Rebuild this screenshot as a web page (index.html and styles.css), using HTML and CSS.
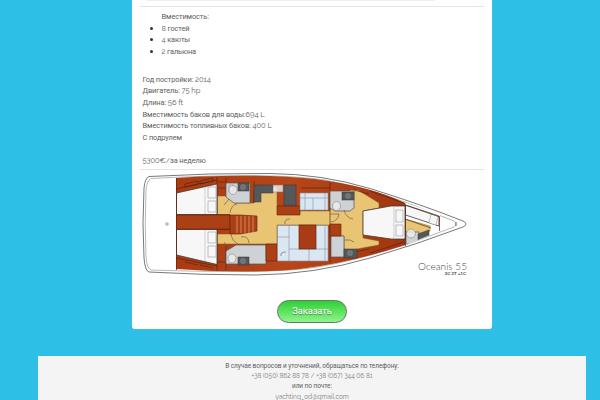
FILE: index.html
```
<!DOCTYPE html>
<html lang="ru">
<head>
<meta charset="utf-8">
<title>Oceanis 55</title>
<link rel="stylesheet" href="styles.css">
</head>
<body>
<main class="card">
  <div class="field"></div>
  <hr class="rule">
  <ul class="capacity">
    <li class="heading">Вместимость:</li>
    <li><span class="num">8</span> гостей</li>
    <li><span class="num">4</span> каюты</li>
    <li><span class="num">2</span> гальюна</li>
  </ul>
  <div class="specs">
    <p>Год постройки: <span class="num">2014</span></p>
    <p>Двигатель: <span class="num">75 hp</span></p>
    <p>Длина: <span class="num">56 ft</span></p>
    <p>Вместимость баков для воды:<span class="num">694 L</span></p>
    <p>Вместимость топливных баков: <span class="num">400 L</span></p>
    <p>С подрулем</p>
    <p class="price"><span class="num">5300€/</span>за неделю</p>
  </div>
  <hr class="rule">
  <svg class="plan" viewBox="140 170 330 110" width="330" height="110">
    <defs>
      <clipPath id="inside"><path d="M176 178 L200 176.500 Q270 174 315 179 Q370 186 405 203 L440 214 L440 231 L405 245 Q350 263 300 269 Q250 274 176 269Z"/></clipPath>
      <linearGradient id="wood" x1="0" y1="0" x2="1" y2="0"><stop offset="0" stop-color="#a93a12"/><stop offset=".5" stop-color="#b74719"/><stop offset="1" stop-color="#a23510"/></linearGradient>
    </defs>
    <path class="hull" d="M149 176.500 Q210 173 270 173.500 Q322 174 370 188.500 Q420 204 463 221 Q469 224 463 227 Q418 244 370 258 Q314 274.500 255 275 Q200 275 149 272 Q145 271 144 258 Q142 224 144 188 Q145 178 149 176.500Z"/>
    <path class="hull thin" d="M151 178.500 Q270 172 325 180 Q370 189 405 202 L454 221 Q458 224 454 227 L405 245 Q350 262 315 267.500 Q270 274 151 270 Q147 269 146 257 Q144.500 224 146 190 Q147 180 151 178.500Z"/>
    <g clip-path="url(#inside)">
      <rect x="176" y="172" width="229" height="104" fill="url(#wood)"/>
      <path class="foredeck" d="M405 200L442 212V232L405 248Z"/>
      <g class="floor">
        <path d="M217 196H234V203H254V187H277V206H300V211H330V205H350V190H358L379 203V208L363 211V238L379 241V245L357 249V256H344V236H330V225H277V244H217V234H231V215H217Z"/>
        <path d="M405 219L430 226V231L405 240Z"/>
      </g>
      <g class="line">
        <path d="M176 214.500H230M176 229.500H230M217 177V215M217 229V271M254 181V203M330 182V262M405 200V246M176 189L217 180M176 258L217 266M226 178V192M226 246V270"/>
        <path d="M185 184L198 181V184L185 187ZM200 181L213 178V181L200 184ZM185 262L198 265M200 265L213 268M218 182H225M218 188H225M218 262H225M301 188H330M370 191L404 203M370 253L404 242M354 190L369 194M354 252L369 249"/>
      </g>
      <g class="bed">
        <path d="M176.500 193L217 184V214.500H176.500Z"/>
        <path d="M176.500 229.500H217V264.500L176.500 255Z"/>
        <path d="M363 211L391 206H405V239H391L363 235Z"/>
        <path d="M405.500 205L439 216V226L405.500 215Z"/>
      </g>
      <path class="shade" d="M205 187V214M205 230V261M394 206V239"/>
      <g class="bed pillow">
        <rect x="208" y="187" width="8" height="11"/><rect x="208" y="201" width="8" height="11"/>
        <rect x="208" y="232" width="8" height="11"/><rect x="208" y="246" width="8" height="11"/>
        <rect x="396" y="210" width="7" height="12"/><rect x="396" y="225" width="7" height="11"/>
        <path d="M431 214L438 216L436 225L429 223Z"/>
      </g>
      <g class="bath">
        <path d="M226 183H250V203H234L226 197Z"/>
        <path d="M236 245H266V264H226V251Z"/>
        <path d="M330 191H354V208L350 211H335L330 208Z"/>
        <path d="M331 236H344V257H331Z"/>
        <path d="M406 232H419V244H406Z"/>
      </g>
      <g class="dark">
        <rect x="238" y="183" width="11" height="8"/>
        <rect x="238" y="257" width="11" height="8"/>
        <path d="M255 185H273V193H261V202H254V191Z"/>
        <rect x="284" y="185" width="12" height="21"/>
        <rect x="342" y="192" width="12" height="8"/>
        <rect x="344" y="249" width="13" height="9"/>
        <path d="M418 234L429 230V237L418 241Z"/>
      </g>
      <g class="toilet">
        <rect x="229" y="185" width="4" height="6"/><ellipse cx="233" cy="190" rx="4" ry="4.500"/>
        <ellipse cx="232" cy="258.500" rx="4" ry="4.500"/><ellipse cx="336.500" cy="206" rx="4" ry="4.500"/>
        <circle cx="411" cy="233.500" r="4.500"/><rect x="273" y="185" width="10" height="7"/>
      </g>
      <g class="basin">
        <circle cx="243" cy="187" r="2.500"/><circle cx="243" cy="261" r="2.500"/><circle cx="348" cy="196" r="2.500"/><circle cx="350" cy="253" r="2.500"/>
      </g>
      <g class="wood">
        <path d="M277 206H300V215H277Z"/>
        <path d="M176 215H230V229H176Z"/>
        <path d="M230 215H240L257 216V231L240 234H230Z"/>
        <path d="M266 244H277V261H266Z"/>
        <path d="M330 224H341V236H330Z"/>
      </g>
      <path class="steps" d="M237 216V233M241 216V233M245 216V233M249 216V233M253 216V233"/>
      <g class="sofa">
        <path d="M300 193H328V210H300Z"/>
        <path d="M277.500 225.500H328V261H277.500Z"/>
        <path d="M300 198H328M305 193V210M325 193V210M313 198V210M289 225V261M277.500 237H289M289 249H328M309 249V261M325 225V261"/>
      </g>
      <rect class="table" x="299" y="225" width="17" height="24"/>
      <g class="line door">
        <path d="M224 205L229 199M230 213Q231 205 237 204M224 242L229 248M231 234Q232 241 238 244M330 214H339Q338 221 331 222M344 210Q346 218 353 219M345 240Q350 239 354 242M241 237Q248 235 249 243"/>
        <path d="M285 224Q284 219 290 219M281 256Q280 252 286 252"/>
      </g>
    </g>
    <path class="line" d="M176.500 178V270M405.500 205V246M439.500 217V231M405 205L440 217M405 219L431 228M456 222V226"/>
    <circle class="mark" cx="167" cy="224" r="1.300"/><path class="mark" d="M165 224H169M167 222V226"/>
    <text class="model" x="418" y="269.500" textLength="49" lengthAdjust="spacingAndGlyphs">Oceanis 55</text>
    <text class="variant" x="444.500" y="275" textLength="21.500" lengthAdjust="spacingAndGlyphs">3C 3T +1C</text>
  </svg>
  <div class="actions"><button class="order" type="button">Заказать</button></div>
</main>
<footer class="footer">
  <p>В случае вопросов и уточнений, обращаться по телефону:</p>
  <p class="light num">+38 (050) 862 88 78 / +38 (067) 344 06 81</p>
  <p>или по почте:</p>
  <p class="light num">yachting_od@gmail.com</p>
</footer>
</body>
</html>
```
FILE: styles.css
```
* { box-sizing: border-box; }
body {
  margin: 0;
  height: 400px;
  overflow: hidden;
  background: #2dbfe5;
  color: #606060;
  font: 7.4px/11.6px Roboto, "Liberation Sans", sans-serif;
}
p { margin: 0; }
.num { font-family: Raleway, "Open Sans", sans-serif; }
.card {
  width: 360px;
  height: 329px;
  margin-left: 132px;
  padding: 0 8px;
  background: #fff;
  border-radius: 0 0 3px 3px;
  box-shadow: 0 0 1px #b5dce8;
}
.field {
  width: 288px;
  height: 1px;
  margin-left: 7px;
  background: #eee;
}
.rule {
  height: 1px;
  margin: 0;
  border: 0;
  background: #e5e5e5;
}
.field + .rule { margin-top: 5px; }
.capacity {
  margin: 4px 0 0;
  padding: 0 0 0 21.5px;
  letter-spacing: -.1px;
}
.capacity .heading { list-style: none; }
.capacity li::marker { color: #333; font-size: 8.5px; }
.specs {
  margin: 16.5px 0 0 2.5px;
  letter-spacing: -.1px;
}
.specs .num { font-size: 7.6px; }
.price { margin-top: 11.6px; }
.specs + .rule { margin-top: 2px; }
.plan { display: block; margin-top: .5px; }
.actions {
  display: flex;
  justify-content: center;
  margin-top: 19.5px;
}
.order {
  width: 70px;
  height: 23px;
  padding: 0;
  border: 1px solid #63786a;
  border-radius: 12px;
  background: linear-gradient(#2fcf35, #8ff58a);
  color: #fff;
  font: 9.2px/20px Roboto, "Liberation Sans", sans-serif;
  text-shadow: 0 1px 1px #55805a;
}
.footer {
  width: 548px;
  height: 44px;
  margin: 27px 0 0 38px;
  padding-top: 5px;
  background: #f4f4f4;
  font-size: 6.5px;
  line-height: 10.2px;
  letter-spacing: -.06px;
  text-align: center;
}
.light { color: #7c7c7c; letter-spacing: 0; }

.hull { fill: #fff; stroke: #555; stroke-width: .8; }
.thin { stroke: #888; stroke-width: .6; }
.foredeck { fill: #fff; }
.floor { fill: #e8c473; stroke: #82581f; stroke-width: .5; }
.line { fill: none; stroke: #572512; stroke-width: .7; }
.door { stroke: #555; stroke-width: .6; }
.bed { fill: #f7f7f8; stroke: #453a38; stroke-width: .8; }
.pillow { stroke: #999; stroke-width: .6; }
.shade { fill: none; stroke: #bbb; stroke-width: .7; }
.bath { fill: #cfd2d5; stroke: #555; stroke-width: .7; }
.dark { fill: #55585b; stroke: #333; stroke-width: .5; }
.toilet { fill: #eee; fill-opacity: .8; stroke: #777; stroke-width: .5; }
.basin { fill: #6e7276; stroke: #999; stroke-width: .4; }
.wood { fill: #ad3f15; stroke: #5a210d; stroke-width: .6; }
.steps { fill: none; stroke: #dda077; stroke-width: .8; }
.sofa { fill: #dbe6f3; stroke: #8792a0; stroke-width: .6; }
.table { fill: #a93c14; stroke: #612b17; stroke-width: .7; }
.mark { fill: none; stroke: #999; stroke-width: .5; }
.model { fill: #444; font: 300 10px Lato, sans-serif; }
.variant { fill: #444; font: bold 4.5px Lato, sans-serif; }
```
